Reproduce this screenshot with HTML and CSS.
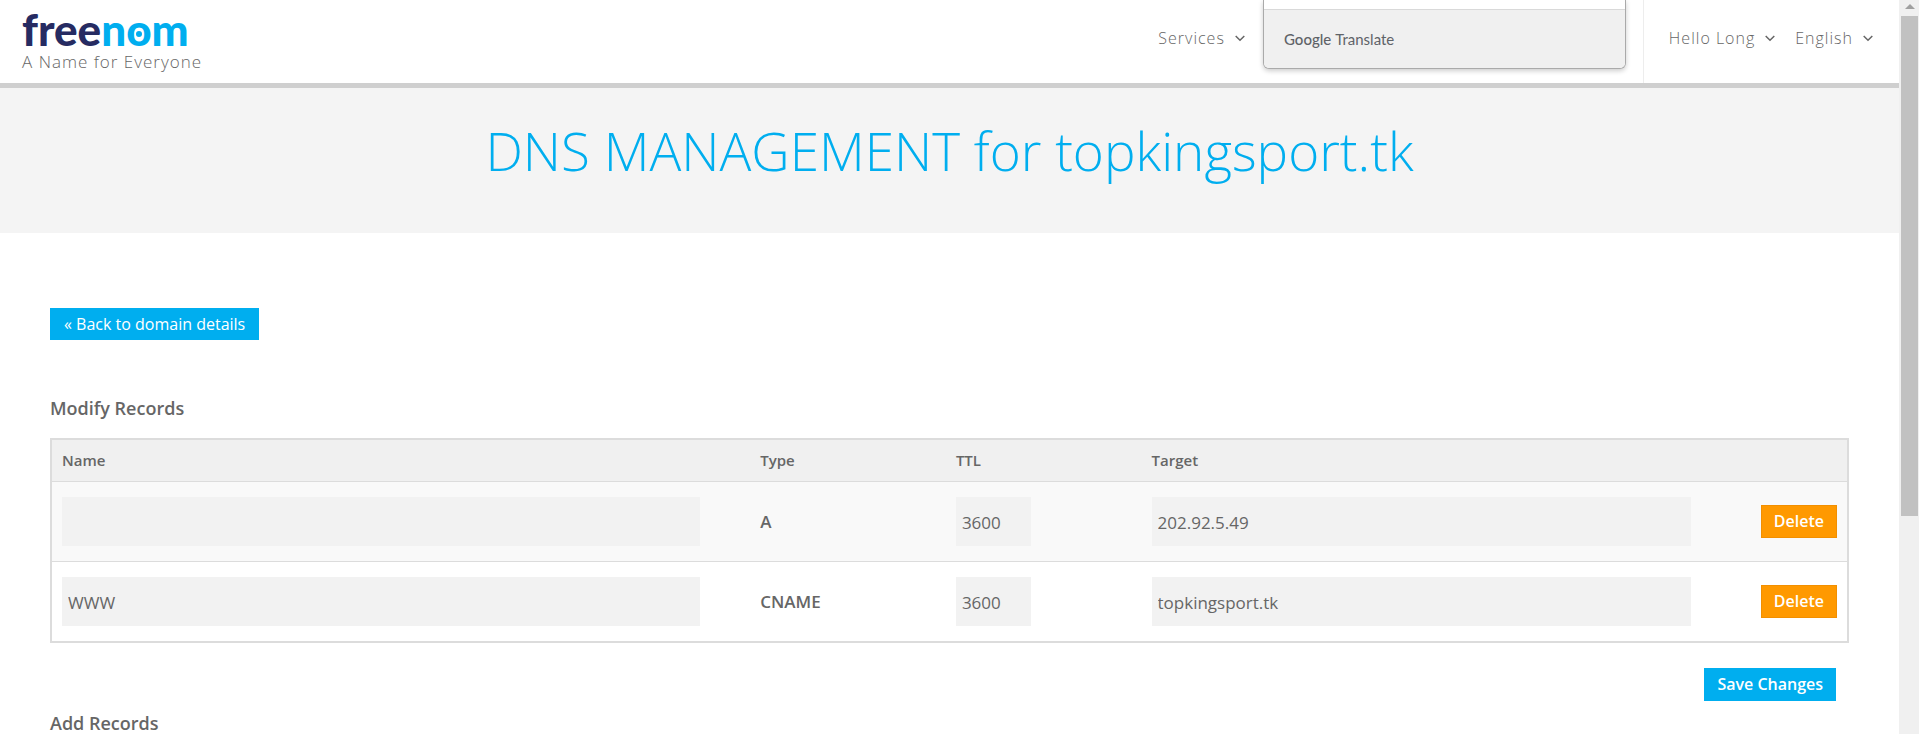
FILE: index.html
```html
<!DOCTYPE html>
<html lang="en">
<head>
<meta charset="utf-8">
<meta name="viewport" content="width=device-width, initial-scale=1">
<title>DNS MANAGEMENT for topkingsport.tk</title>
<link rel="stylesheet" href="styles.css">
</head>
<body>
<div class="page">
  <header class="header">
    <a class="brand" href="#">
      <span class="logo"><span class="logo-free">free</span><span class="logo-nom">n<span class="logo-o">o</span>m</span></span>
      <span class="tagline">A Name for Everyone</span>
    </a>
    <nav class="services">
      <a class="nav-link" href="#">Services
        <svg class="chevron" viewBox="0 0 10 7" aria-hidden="true"><path d="M.7 1 5 5.300 9.300 1"/></svg></a>
    </nav>
    <nav class="account">
      <a class="nav-link" href="#">Hello Long
        <svg class="chevron" viewBox="0 0 10 7" aria-hidden="true"><path d="M.7 1 5 5.300 9.300 1"/></svg></a>
      <a class="nav-link" href="#">English
        <svg class="chevron" viewBox="0 0 10 7" aria-hidden="true"><path d="M.7 1 5 5.300 9.300 1"/></svg></a>
    </nav>
    <aside class="translate">
      <div class="translate-foot"><span class="google">Google</span><span>Translate</span></div>
    </aside>
  </header>

  <section class="hero">
    <h1 class="hero-title">DNS MANAGEMENT for topkingsport.tk</h1>
  </section>

  <main class="content">
    <a class="button button-back" href="#">« Back to domain details</a>

    <form class="records">
      <h2 class="heading">Modify Records</h2>
      <table class="table">
        <colgroup>
          <col class="col-name"><col class="col-small"><col class="col-small"><col class="col-target"><col>
        </colgroup>
        <thead>
          <tr><th>Name</th><th>Type</th><th>TTL</th><th>Target</th><th></th></tr>
        </thead>
        <tbody>
          <tr>
            <td class="wide"><input class="field" type="text" aria-label="Name" value=""></td>
            <td class="type">A</td>
            <td><input class="field field-ttl" type="text" aria-label="TTL" value="3600"></td>
            <td class="wide"><input class="field" type="text" aria-label="Target" value="202.92.5.49"></td>
            <td class="action"><button class="button button-delete" type="button">Delete</button></td>
          </tr>
          <tr>
            <td class="wide"><input class="field" type="text" aria-label="Name" value="WWW"></td>
            <td class="type">CNAME</td>
            <td><input class="field field-ttl" type="text" aria-label="TTL" value="3600"></td>
            <td class="wide"><input class="field" type="text" aria-label="Target" value="topkingsport.tk"></td>
            <td class="action"><button class="button button-delete" type="button">Delete</button></td>
          </tr>
        </tbody>
      </table>
      <div class="save-row"><button class="button button-save" type="submit">Save Changes</button></div>
    </form>
    <h2 class="heading">Add Records</h2>
  </main>
</div>
<div class="scrollbar" aria-hidden="true">
  <svg class="scroll-arrow" viewBox="0 0 10 5"><path d="M0 5 5 0 10 5Z"/></svg>
  <div class="scroll-thumb"></div>
</div>
</body>
</html>
```

FILE: styles.css
```css
* {
  box-sizing: border-box;
}

body {
  margin: 0;
  height: 100vh;
  display: flex;
  overflow: hidden;
  background: #fff;
  color: #666;
  font-family: "Open Sans", "Noto Sans", sans-serif;
  font-size: 16px;
}

a {
  color: inherit;
  text-decoration: none;
}

.page {
  flex: 1;
  min-width: 0;
  overflow: hidden;
}

.header {
  position: relative;
  display: flex;
  height: 88px;
  border-bottom: 5px solid #cfcfcf;
}

.brand {
  margin-right: auto;
  padding: 8px 0 0 22px;
  display: flex;
  flex-direction: column;
}

.logo {
  font-family: Lato, sans-serif;
  font-size: 44px;
  font-weight: 900;
  line-height: 42px;
}

.logo-free {
  color: #262b62;
}

.logo-nom {
  color: #00aeef;
}

.logo-o {
  position: relative;
}

.logo-o::after {
  content: "";
  position: absolute;
  left: 50%;
  top: 60%;
  width: 6px;
  height: 6px;
  margin: -3px;
  border-radius: 50%;
  background: #00aeef;
}

.tagline {
  font-size: 17px;
  font-weight: 300;
  line-height: 24px;
  letter-spacing: 1px;
}

.services,
.account {
  display: flex;
  gap: 20px;
  padding-top: 26px;
}

.services {
  padding-right: 398px;
}

.account {
  padding-left: 25px;
  padding-right: 26px;
  border-left: 1px solid #ededed;
}

.nav-link {
  display: flex;
  gap: 10px;
  height: 24px;
  align-items: center;
  font-weight: 300;
  letter-spacing: 1px;
}

.chevron {
  width: 10px;
  height: 7px;
  fill: none;
  stroke: #666;
  stroke-width: 1.5;
}

.translate {
  position: absolute;
  top: 0;
  right: 273px;
  width: 363px;
  padding-top: 9px;
  background: #fff;
  border: 1px solid #aaa;
  border-top: 0;
  border-radius: 0 0 6px 6px;
  box-shadow: 0 2px 5px rgba(0, 0, 0, 0.2);
}

.translate-foot {
  display: flex;
  gap: 4px;
  padding: 0 20px;
  border-top: 1px solid #d9d9d9;
  border-radius: 0 0 5px 5px;
  background: #f0f0f0;
  color: #5f6368;
  font-family: Lato, sans-serif;
  font-size: 15px;
  line-height: 58px;
}

.google {
  font-weight: 500;
}

.hero {
  padding: 26px 20px 45px;
  background: #f4f4f4;
  text-align: center;
}

.hero-title {
  margin: 0;
  color: #00aeef;
  font-size: 53px;
  font-weight: 300;
  line-height: 74px;
}

.content {
  padding: 75px 50px 0;
}

.button {
  display: inline-block;
  padding: 0 13px;
  border: 0;
  background: #00aeef;
  color: #fff;
  font: 400 16px/32px "Open Sans", sans-serif;
}

.button-back {
  padding: 0 14px;
}

.heading {
  margin: 0;
  font-size: 18px;
  font-weight: 600;
  line-height: 26px;
}

.records {
  padding-top: 55px;
}

.table {
  width: 100%;
  margin-top: 17px;
  table-layout: fixed;
  border-spacing: 0;
  border: 2px solid #dcdcdc;
}

.col-name {
  width: 38.9%;
}

.col-small {
  width: 10.9%;
}

.col-target {
  width: 33.4%;
}

th {
  padding: 10px;
  height: 42px;
  background: #f0f0f0;
  border-bottom: 1px solid #dcdcdc;
  font-size: 15px;
  font-weight: 600;
  line-height: 21px;
  text-align: left;
}

td {
  height: 80px;
  padding: 0 10px;
  border-bottom: 1px solid #dcdcdc;
  vertical-align: middle;
}

tbody tr:nth-child(odd) {
  background: #f9f9f9;
}

tbody tr:last-child td {
  height: 79px;
  border-bottom: 0;
}

.wide {
  padding-right: 50px;
}

.field {
  display: block;
  width: 100%;
  height: 49px;
  padding: 1px 6px 0;
  border: 0;
  border-radius: 0;
  background: #f2f2f2;
  color: #666;
  font: 400 17px "Open Sans", sans-serif;
}

.field-ttl {
  width: 75px;
}

.type {
  font-size: 17px;
  font-weight: 600;
}

.action {
  text-align: right;
}

.button-delete {
  border: 1px solid #f28f00;
  padding: 0 12px;
  background: #f90;
  font-weight: 600;
  line-height: 31px;
}

.button-save {
  font-weight: 600;
  line-height: 33px;
}

.save-row {
  display: flex;
  justify-content: flex-end;
  padding: 25px 13px 9px;
}

.scrollbar {
  width: 20px;
  padding: 4px 1px 0 2px;
  background: #f0f0f0;
}

.scroll-arrow {
  display: block;
  width: 10px;
  height: 5px;
  margin: 0 auto 7px;
  fill: #a0a0a0;
}

.scroll-thumb {
  height: 500px;
  background: #c1c1c1;
}
```
